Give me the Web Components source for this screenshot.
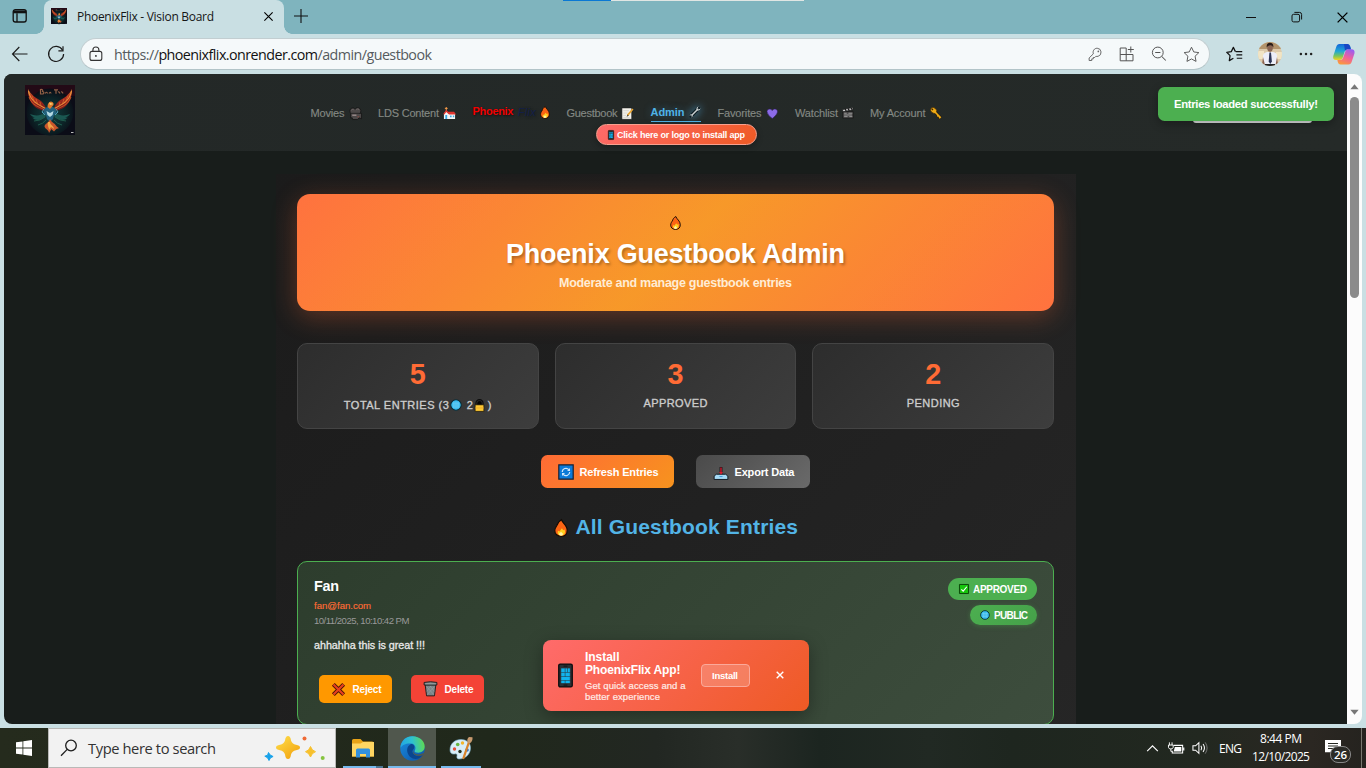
<!DOCTYPE html>
<html lang="en">
<head>
<meta charset="utf-8">
<title>PhoenixFlix - Vision Board</title>
<style>
html,body{margin:0;padding:0;width:1366px;height:768px;overflow:hidden;font-family:"Liberation Sans",Arial,sans-serif}
</style>
</head>
<body>
<desktop-screen></desktop-screen>
<script>
const ICONS = {
  workspaces:['0 0 16 16','<g fill="none" stroke="#111" stroke-width="1.3"><rect x="1.200" y="1.600" width="13" height="12.400" rx="2.200"/><path d="M5 5.200V14"/></g><path d="M1.200 2.400h13v2.900h-13z" fill="#111"/>'],
  cross:['0 0 12 12','<path d="M1.500 1.500l9 9M10.500 1.500l-9 9" stroke="currentColor" stroke-width="1.250" fill="none"/>'],
  close:['0 0 10 10','<path d="M1.700 1.700l6.600 6.600M8.300 1.700L1.700 8.300" stroke="#fff" stroke-width="1.400" fill="none"/>'],
  plus:['0 0 14 14','<path d="M7 0v14M0 7h14" stroke="#111" stroke-width="1.100"/>'],
  min:['0 0 12 12','<path d="M1 6.500h10" stroke="#111" stroke-width="1"/>'],
  restore:['0 0 12 12','<rect x="1" y="3.300" width="7.600" height="7.600" rx="1.600" fill="none" stroke="#111"/><path d="M3.400 1.400h5.100a2.100 2.100 0 0 1 2.100 2.100v5" fill="none" stroke="#111"/>'],
  back:['0 0 18 16','<path d="M16.500 8H1.500M8.300 1L1.500 8l6.800 7" fill="none" stroke="#1b1b1b" stroke-width="1.150"/>'],
  reload:['0 0 18 18','<path d="M15.600 5.200A7.500 7.500 0 1 0 16.600 9" fill="none" stroke="#1b1b1b" stroke-width="1.200"/><path d="M16 1.200v4.600h-4.600" fill="none" stroke="#1b1b1b" stroke-width="1.200"/>'],
  lock:['0 0 14 16','<rect x="1" y="5.400" width="11.800" height="9" rx="2" fill="none" stroke="#333" stroke-width="1.100"/><path d="M3.900 5.200V4a3 3 0 0 1 6 0v1.200" fill="none" stroke="#333" stroke-width="1.100"/><circle cx="6.900" cy="9.900" r=".950" fill="#333"/>'],
  keyo:['0 0 16 16','<path d="M9.800 1.300a4.400 4.400 0 0 1 1 8.600c-1 .3-1.700.2-2.400 0L7.200 11.200H5.600v1.500H4v1.700H1.200v-2.700l4.500-4.400C4.700 4.200 6.700 1.300 9.800 1.300z" fill="none" stroke="#666" stroke-width="1.050" stroke-linejoin="round"/><circle cx="11" cy="4.700" r=".9" fill="#666"/>'],
  apps:['0 0 16 16','<path d="M7.200 2H1.200v12.800H14V8.500H1.200M7.200 2v12.800M11.800.5v6M8.800 3.500h6" fill="none" stroke="#555" stroke-width="1"/>'],
  zoomout:['0 0 16 16','<circle cx="6.800" cy="6.500" r="5.400" fill="none" stroke="#555"/><path d="M10.800 10.500l4 4M4.200 6.500h5.200" stroke="#555" stroke-width="1.050"/>'],
  star:['0 0 18 18','<path d="M9 1.300l2.400 5 5.400.7-4 3.800 1 5.500L9 13.700l-4.800 2.600 1-5.500-4-3.800 5.400-.7z" fill="none" stroke="#555" stroke-width="1" stroke-linejoin="round"/>'],
  favs:['0 0 18 16','<path d="M10 5.500L7.800 1 5.600 5.500.8 6.200l3.500 3.500-.8 5.300 4.300-2.500M10.300 5.500h6.900M11 9h6.200M11.400 12.500h5.800" fill="none" stroke="#111" stroke-width="1.300" stroke-linejoin="round"/>'],
  dots:['0 0 14 4','<g fill="#222"><circle cx="1.900" cy="2" r="1.250"/><circle cx="7" cy="2" r="1.250"/><circle cx="12.100" cy="2" r="1.250"/></g>'],
  avatar:['0 0 24 24','<defs><clipPath id="c"><circle cx="12" cy="12" r="12"/></clipPath></defs><g clip-path="url(#c)"><path d="M0 0h24v24H0z" fill="#dccaab"/><path d="M0 0h24v7H0z" fill="#b3946c"/><path d="M0 9h6v8H0zM18 10h6v7h-6z" fill="#f1e4c4"/><path d="M5 23V13q1-2.500 4-3h6q4 .5 4 3.500V23z" fill="#eceef8"/><path d="M5 15l2 8H4zM19 15l-1.500 8H20z" fill="#8a6450"/><ellipse cx="12" cy="5.800" rx="2.800" ry="4" fill="#8a6553"/><path d="M8.700 5.500Q8.200.8 12 .8t3.300 4.700Q14.500 3 12 3.200T8.700 5.500z" fill="#2a1c18"/><path d="M11.400 10.500h1.600l.9 9-1.600 2.500-1.600-2.500z" fill="#2b3556"/><path d="M7 22h10v2H7z" fill="#222"/></g>'],
  copilot:['0 0 22 21','<defs><linearGradient id="a" x1="0" y1="0" x2="0" y2="1"><stop offset="0" stop-color="#1464d8"/><stop offset=".45" stop-color="#1ea7d6"/><stop offset=".75" stop-color="#7ac65a"/><stop offset="1" stop-color="#f4d21f"/></linearGradient><linearGradient id="b" x1="0.7" y1="0" x2="0.3" y2="1"><stop offset="0" stop-color="#9b5cf0"/><stop offset=".5" stop-color="#f0609c"/><stop offset="1" stop-color="#fb9a3c"/></linearGradient></defs><path d="M6.500 0h8q2 0 2.700 2.500l.7 2.800h-3.500q-2 0-2.700 2.300L9.600 14q-.8 2-2.600 2H3Q-.6 16 .3 12L3.200 3Q4 0 6.500 0z" fill="url(#a)"/><path d="M15.500 20.500h-8q-2 0-2.700-2.500l-.4-2h3q2 0 2.700-2.300l2.200-6.200q.7-2.200 2.700-2.200h3.500q3.500.2 3 4L18.800 17.500q-.8 3-3.300 3z" fill="url(#b)"/><path d="M11 0h3.500q2 0 2.700 2.500l.7 2.800h-3.500q-1.500 0-2.400 1.600z" fill="#1846c4"/>'],
  phoenix:['0 0 50 50','<defs><radialGradient id="g" cx=".5" cy=".55" r=".55"><stop offset="0" stop-color="#123f40"/><stop offset=".6" stop-color="#0c2427"/><stop offset="1" stop-color="#0a0c16"/></radialGradient><linearGradient id="w" x1="0" y1="0" x2="0" y2="1"><stop offset="0" stop-color="#d9822f"/><stop offset=".35" stop-color="#b5321f"/><stop offset="1" stop-color="#6b1519"/></linearGradient></defs><path d="M0 0h50v50H0z" fill="#0b0c17"/><path d="M0 0h50v11H0z" fill="#230a16"/><circle cx="25" cy="27" r="23.500" fill="url(#g)"/><path d="M22 26C13 26 3 20 3 4c1.500 3.500 3.500 5 5.500 7 4 3.500 9 4 12.500 12zM28 26C37 26 47 20 47 4c-1.500 3.500-3.500 5-5.500 7-4 3.500-9 4-12.500 12z" fill="url(#w)"/><path d="M3.500 6c1.500 9 8 13 17 17.500M46.500 6c-1.500 9-8 13-17 17.500" stroke="#e8923c" stroke-width="1.100" fill="none"/><path d="M4 12c3 8 8 9 15 12.500M46 12c-3 8-8 9-15 12.500M7 11l3 7M11 14l2 6M15 17l1 4M43 11l-3 7M39 14l-2 6M35 17l-1 4" stroke="#df6a2b" stroke-width=".7" fill="none"/><path d="M20 28c-5 3-10 3-15 1 1 2 3 3 5 3.500-1 0-2 .5-3 0 4 4 10 3 14-1.500zM30 28c5 3 10 3 15 1-1 2-3 3-5 3.500 1 0 2 .5 3 0-4 4-10 3-14-1.500z" fill="#1a5751"/><path d="M9 36q6 0 11-4M41 36q-6 0-11-4M13 40q5-1 8-5M37 40q-5-1-8-5" stroke="#1f5c4c" stroke-width="1" fill="none"/><path d="M20 23l5-2 5 2 2 5-3 2-1 4-3 3-3-3-1-4-3-2z" fill="#23627e"/><path d="M21.500 26l3.500 2 3.500-2-1 4-2.500 2-2.500-2z" fill="#b5dbe4"/><path d="M19 24l-2 3 3 3M31 24l2 3-3 3" stroke="#4e9db4" fill="none"/><path d="M22.500 22q0-5 3.500-5.500 3 .5 2.500 3.500L25 24z" fill="#df7a2c"/><path d="M24 17.500l4.500 1.500-3.500 1z" fill="#fbd074"/><path d="M25 34c1 3 4.500 4 6 6.500 1 2 3 1.500 2.500 3-2-.5-3 1-4.500 3-1-1-2-1.500-2.500-2.500L24 48c0-3-4-4-4.500-6.500C20 38 24 38 25 34z" fill="#c9562b"/><path d="M25 37c0 3 4 4 4 7l-3-2-2 3c0-3-2-4-1-8z" fill="#f0a447"/><path d="M15.500 9v-4.500q3-.3 2 2 2.500.3.500 2.500zM20 8.500q2-2.500 2.500 0M24 8.500q1.500-2.500 2 0M29 4.800h4M31 4.800V8.800M33 7q1-.7 2 1.500M36 7q1.500-.5 2 1.500" stroke="#a9704f" stroke-width="1.200" fill="none" opacity=".85"/><path d="M46 47h2.500v1H46z" fill="#bbb"/>'],
  camera:['0 0 14 14','<path d="M1 4a3 3 0 0 1 5.500-1.600A3.400 3.400 0 0 1 12.800 4q0 1.700-1.500 3l2.200-.3v6l-2.500-1-2 1.800H4l-.5-1.800H1.800V7Q1 5.800 1 4z" fill="#4d4949" stroke="#111" stroke-width=".8"/><path d="M2.600 3.600q1-1.600 2.500-.6M7.800 3q1.400-1.700 3-.3" stroke="#77706f" stroke-width=".8" fill="none"/><path d="M1.800 6.800h9" stroke="#191818" stroke-width=".8"/><path d="M3.500 9h4.500" stroke="#938585" stroke-width="1.600"/><path d="M9 10.500h2" stroke="#8c4a43" stroke-width="1"/>'],
  church:['0 0 14 14','<path d="M3.500 0v4M2 1.500h3" stroke="#ffa04a" stroke-width="1"/><path d="M1 7l2.500-3 2.500 3h7v6H1z" fill="#f5f5f5"/><path d="M.3 7.500L3.500 3l2 2.200H12L14 8H6.500l-3-2.500-2 2.500z" fill="#e0342e"/><path d="M2.500 8.500h2V13h-2zM7.500 9.200h1.800v1.800H7.500zM10.600 9.200h1.500v1.800h-1.500z" fill="#38a9e4"/>'],
  fire:['0 0 14 18','<path d="M7.500.7c.6 3 5.700 5.600 5.700 10.500 0 4-2.600 6.100-6.100 6.100S.8 15.200.8 11.700c0-2.600 1.300-4 2.200-5.400C3.600 4.500 4.500 2 7.500.7z" fill="#fb6414" stroke="#120b05" stroke-width="1.200"/><path d="M8 9.200l1.100 2 1.400-.8c1.300 3.300.2 6-3.400 6-3.200 0-4-2.400-3-4.700l1.300.9z" fill="#ffd01f"/><path d="M7 12.800l2.100 2.300Q8.800 16.700 7 16.700T4.900 15z" fill="#fff5a8"/>'],
  memo:['0 0 14 14','<path d="M1 1h10.500v12.300H1z" fill="#f3f1ea" stroke="#1c1c1c" stroke-width=".6"/><path d="M2.500 4h6M2.500 6.500h4.500M2.500 9h3M2.500 11.200h7" stroke="#c9c8c4" stroke-width=".7"/><path d="M12.800 2.200L7 9" stroke="#e8a532" stroke-width="1.800"/><path d="M7.300 8.200L6 10.500 8.300 9.400z" fill="#222"/>'],
  wrench:['0 0 14 14','<path d="M2.500 11.500L11 3" stroke="#0d1c22" stroke-width="4.200" stroke-linecap="round"/><path d="M3 11L10.800 3.200" stroke="#c9cfd0" stroke-width="1.700"/><path d="M9.300 2.200l1.500-1.200M11.800 4.700l1.200-1.500M9.300 2.200v2.500h2.500M1.300 11.200l1-1.400 2 2-1.500 1" stroke="#c9cfd0" stroke-width="1.100" fill="none"/>'],
  heart:['0 0 14 13','<path d="M7 12.400Q1 8.200.8 4.400C.7 1 5 .1 7 3 9 .1 13.300 1 13.200 4.400 13 8.200 7 12.400 7 12.400z" fill="#8c6be8" stroke="#2b1d55" stroke-width=".7"/>'],
  clapper:['0 0 14 14','<path d="M1 5.500h12V13H1z" fill="#4c4b4b" stroke="#111" stroke-width=".8"/><path d="M1 5.500L.7 3 12.500.7l.5 2.500z" fill="#ddd" stroke="#111" stroke-width=".8"/><path d="M3.500 2.500l1.500 2M7 1.800L8.500 4M10.500 1.200L12 3.200" stroke="#111" stroke-width="1.400"/><path d="M2.500 7.300h3M7.500 7.300H12M2.500 9.300h9M2.500 11.200h4M8.500 11.200H12" stroke="#aaa" stroke-width=".9"/>'],
  key:['0 0 14 14','<path d="M5.500 5.500l7 7M9.500 9.700l-1.500 1.500M11.700 12l-1.500 1.500" stroke="#2d1c04" stroke-width="3"/><ellipse cx="4.200" cy="4" rx="3.800" ry="3.100" transform="rotate(40 4.200 4)" fill="#f0ab16" stroke="#2d1c04" stroke-width=".7"/><path d="M5 5l7.500 7.700M9.800 9.700l-1.300 1.300M12 11.800l-1.400 1.300" stroke="#f0ab16" stroke-width="1.900"/><circle cx="2.800" cy="2.800" r="1" fill="#3a260a"/>'],
  phone:['0 0 16 26','<rect x=".8" y=".8" width="14.400" height="24.400" rx="1.500" fill="#2c3034" stroke="#0c0c0e" stroke-width="1.400"/><path d="M3.500 5.500h3.700v3.800H3.500zM8 5.500h1.800v3.800H8zM10.600 5.500h2v3.800h-2zM3.500 10h3.700v3.700H3.500zM8 10h4.600v3.700H8zM3.500 14.500h9.100v3.300H3.500zM3.500 18.500h3.700v2.600H3.500zM8 18.500h4.600v2.600H8z" fill="#12b4ee" stroke="#12b4ee" stroke-width=".3"/><path d="M6 23.200h4M6 3h4" stroke="#111"/>'],
  globe:['0 0 14 14','<circle cx="7" cy="7" r="6.100" fill="#22b4ec" stroke="#0c2932" stroke-width="1.200"/><path d="M2.500 4.800h9M1.800 7h10.400M2.500 9.300h9M7 2v10M4.600 2.500v9M9.400 2.500v9" stroke="#a9e5f7" stroke-width=".5"/>'],
  padlock:['0 0 12 14','<path d="M2.800 7V4.500a3.200 3.200 0 0 1 6.400 0V7" fill="#050505" stroke="#0b0b0b" stroke-width="2.600"/><path d="M3 7V4.500a3 3 0 0 1 6 0V7" fill="none" stroke="#343433" stroke-width=".8"/><rect x="1.200" y="6.300" width="9.600" height="7" fill="#fdc834" stroke="#241b07" stroke-width=".8"/><path d="M1.500 9.700h9" stroke="#eaaa2b"/>'],
  refresh:['0 0 16 16','<path d="M.8.8h14.400v14.400H.8z" fill="#0c7ad8" stroke="#172033" stroke-width="1.200"/><path d="M4.300 8a3.700 3.700 0 0 1 6.500-2.400M11.700 8a3.700 3.700 0 0 1-6.500 2.400" fill="none" stroke="#cfe6fa" stroke-width="1.200"/><path d="M12 4v3H9zM4 12V9h3z" fill="#cfe6fa"/>'],
  inbox:['0 0 16 14','<path d="M3 7.800h10l2.400 2v3.600H.6V9.800z" fill="#a7daf5" stroke="#0d151c" stroke-width="1"/><path d="M5.500 9.800q2.500 2.500 5 0z" fill="#3b9fe0"/><path d="M8 0V7" stroke="#161013" stroke-width="3"/><path d="M8 .5V6" stroke="#d81b30" stroke-width="1.500"/><path d="M5.800 5.500L8 8.300l2.200-2.800z" fill="#d81b30"/>'],
  redx:['0 0 16 16','<path d="M2.500 2.500l11 11M13.500 2.500l-11 11" stroke="#4b1407" stroke-width="4.300"/><path d="M2.700 2.700l10.600 10.600M13.300 2.700L2.700 13.300" stroke="#e8401f" stroke-width="2.300"/>'],
  bin:['0 0 16 17','<path d="M2.300 4h11.400l-1.500 11.800H3.800z" fill="#7b8588" stroke="#1b1d1e" stroke-width="1"/><path d="M4 6l7.500 8.500M7.500 5l4.500 6M12 6l-7.500 8.500M8.500 5L4 11" stroke="#99a3a6" stroke-width=".6"/><path d="M1.200 1.500q6.800-1.500 13.600 0v2.700H1.200z" fill="#7c8688" stroke="#1b1d1e" stroke-width="1"/><path d="M2.500 3h11" stroke="#a4acae" stroke-width=".8"/>'],
  check:['0 0 11 11','<path d="M.5.500h10v10H.5z" fill="#16c60c" stroke="#083f07"/><path d="M2.600 5.900l2 2L8.600 3" fill="none" stroke="#fff" stroke-width="1.200"/>'],
  win:['0 0 16 16','<path d="M0 2.300l6.500-.9v6.200H0zM7.300 1.300L16 0v7.600H7.300zM0 8.400h6.500v6.200L0 13.700zM7.300 8.400H16V16l-8.700-1.300z" fill="#fff"/>'],
  search:['0 0 18 18','<circle cx="11" cy="6.500" r="5.300" fill="none" stroke="#1d1d1d" stroke-width="1.300"/><path d="M7.200 10.400L1 16.700" stroke="#1d1d1d" stroke-width="1.300"/>'],
  sparkles:['0 0 62 26','<defs><linearGradient id="y" x1="0" x2=".8" y2="1"><stop offset="0" stop-color="#ffe04d"/><stop offset="1" stop-color="#f2a30f"/></linearGradient></defs><path d="M24 1q2.500 0 3 4.500 1 3.500 5 4.300 4 .7 4 2.700t-4 2.700q-4 .8-5 4.300Q26.500 24 24 24t-3-4.500q-1-3.500-5-4.300-4-.7-4-2.700t4-2.700q4-.8 5-4.300Q21.500 1 24 1z" fill="url(#y)"/><path d="M46.500 11.500q1.200 4 5 5.200-3.800 1.300-5 5.300-1.200-4-5-5.300 3.800-1.200 5-5.200z" fill="#f7c02c" stroke="#f7c02c" stroke-linejoin="round"/><path d="M4.500 17.500l1.600 2.500 3 1.500-2.600 1.300L5 25.500l-1.500-2.800-2.700-1.500 2.800-1z" fill="#18a2ea" stroke="#18a2ea" stroke-linejoin="round"/><circle cx="40.500" cy="3.400" r="2" fill="#ef6a35"/><circle cx="58.700" cy="23" r="2" fill="#86c440"/>'],
  folder:['0 0 22 19','<path d="M0 1.500Q0 0 1.500 0h7l2.500 2.500H20q2 0 2 1.500v13.500H0z" fill="#e8a317"/><path d="M0 4.500h8.500L11 3h11v14.500H0z" fill="#ffd662"/><path d="M4 18.500V11q0-1.500 1.500-1.500h11Q18 9.500 18 11v7.500h-4V15h-6v3.500z" fill="#3391de"/>'],
  edge:['0 0 25 25','<defs><linearGradient id="e" x1="0" y1=".5" x2="1" y2=".4"><stop offset="0" stop-color="#22a5e4"/><stop offset=".5" stop-color="#2fc2cf"/><stop offset="1" stop-color="#5fd94f"/></linearGradient><linearGradient id="f" x1="0" y1="0" x2="1" y2="1"><stop offset="0" stop-color="#1b8fe0"/><stop offset="1" stop-color="#0c51a5"/></linearGradient></defs><circle cx="12.500" cy="12.500" r="12.200" fill="url(#f)"/><path d="M.4 12C1 4.500 6 .3 12.500.3c7.500 0 12.200 5.200 12.200 10.200 0 4-3 6.200-6.300 6.200-2.700 0-4.300-1-3.700-2 1.500-2.300 1-6.700-3.500-7.200C6.500 7 2 8.700.4 12z" fill="url(#e)"/><path d="M11 8c-3 1.500-4.500 4.500-3.500 8.500 1.200 4.500 5.500 7.500 11 6 2-.8 3.500-2.200 4.600-4-4 2.500-8.500 1.500-10.200-1.500-1.200-2 .2-3 1.100-4.500C14.800 10.500 14 8 11 8z" fill="#0a468f"/><path d="M14.200 13.500q-2 2.300.8 4.300 4 2 9-1-.2 1.800-1.200 2.400-5 1.800-8.500-.7-2.700-2.500-.1-5z" fill="#50574d"/>'],
  paint:['0 0 24 24','<path d="M1 14C1 7.500 6 3.500 12 3.500c5 0 9.500 3 9.500 8.500 0 6.500-5.500 11-11.500 11-2 0-2.500-1.500-2-3 .5-1.700-.5-2.500-2.500-2C3 18.500 1 17 1 14z" fill="#d8edf7" stroke="#7fb3cf" stroke-width=".6"/><circle cx="5.500" cy="13" r="1.700" fill="#e4503b"/><circle cx="8.700" cy="8.500" r="1.800" fill="#68b742"/><circle cx="13.500" cy="7" r="1.700" fill="#f3b52b"/><circle cx="18" cy="14" r="1.800" fill="#2e71c9"/><circle cx="11" cy="15.500" r="1.700" fill="#26301f"/><path d="M20 6l-5.500 16" stroke="#d9832b" stroke-width="2.300" stroke-linecap="round"/><path d="M18.500 6.500q-1-3.500 1.500-5.500l3.500.3q.5 3.500-2.500 6z" fill="#c79a6f"/>'],
  chevron:['0 0 14 9','<path d="M1 8l6-6 6 6" fill="none" stroke="#fff" stroke-width="1.300"/>'],
  battery:['0 0 18 13','<path d="M6 3.200h9.500v8H4.500V9" fill="none" stroke="#fff" stroke-width="1.100"/><path d="M7.300 5h6.800v4.600H6z M16 5.500h1.300v3.200H16z" fill="#fff"/><path d="M.5 2.800h5v2.500Q5.200 7 3 7T.5 5.300zM1.500 0v3M4.300 0v3M3 7v2.500h1.500" fill="none" stroke="#fff" stroke-width="1"/>'],
  speaker:['0 0 18 14','<path d="M1 4.700h2.800L7.300 1.300v11.400L3.800 9.300H1z" fill="none" stroke="#fff" stroke-width="1.100"/><path d="M9.500 4.700q1.500 2.300 0 4.600M11.700 2.800q3 4.200 0 8.400" fill="none" stroke="#fff" stroke-width="1.100"/><path d="M14 1q4 6 0 12" fill="none" stroke="#777" stroke-width="1"/>'],
  note:['0 0 16 15','<path d="M0 0h16v12.300H9L6 15v-2.700H0z" fill="#fff"/><path d="M3 3.500h10M3 6h10M3 8.500h6" stroke="#252822" stroke-width="1"/>'],
  up:['0 0 10 6','<path d="M5 0l4.600 5.500H.4z" fill="#777"/>'],
  down:['0 0 10 6','<path d="M5 6L.4.5h9.200z" fill="#777"/>']
};

function element(name, css, html){
  const t = document.createElement('template');
  t.innerHTML = `<style>${css}</style>${html}`;
  customElements.define(name, class extends HTMLElement{
    constructor(){ super(); this.attachShadow({mode:'open'}).append(t.content.cloneNode(true)); }
  });
}

/* <ui-icon name w h>: one drawing from the icon set */
customElements.define('ui-icon', class extends HTMLElement{
  connectedCallback(){
    if(this.shadowRoot) return;
    const [box, body] = ICONS[this.getAttribute('name')];
    const w = this.getAttribute('w'), h = this.getAttribute('h') || w;
    this.attachShadow({mode:'open'}).innerHTML =
      `<style>:host{display:block;flex:none;width:${w}px;height:${h}px}svg{display:block;overflow:visible}</style>
       <svg width="${w}" height="${h}" viewBox="${box}" aria-hidden="true">${body}</svg>`;
  }
});

element('browser-tabs', `
:host{display:flex;height:34px;background:#7fb4be;position:relative;align-items:center}
.ws{padding:0 16px 2px 12px}
.tab{align-self:stretch;width:240px;box-sizing:border-box;background:#c9dfe3;border-radius:8px 8px 0 0;display:flex;align-items:center;padding:0 10px 2px 7px;position:relative}
.tab::before,.tab::after{content:"";position:absolute;bottom:0;width:8px;height:8px}
.tab::before{left:-8px;background:radial-gradient(circle at 0 0,transparent 7.500px,#c9dfe3 8px)}
.tab::after{right:-8px;background:radial-gradient(circle at 100% 0,transparent 7.500px,#c9dfe3 8px)}
.t{font:12px "Open Sans",sans-serif;color:#151515;margin-left:10px}
.x{margin-left:auto}
.plus{margin:-3px auto 0 10px}
.ctl{display:flex;gap:33.500px;padding-right:17px}
.strip{position:absolute;left:563px;top:0;width:241px;height:1px;background:linear-gradient(90deg,#0a78d4 48px,#e0e6e4 48px)}`, `
<div class="ws"><ui-icon name="workspaces" w="16"></ui-icon></div>
<div class="tab"><ui-icon name="phoenix" w="16"></ui-icon><fit-text class="t" w="137">PhoenixFlix - Vision Board</fit-text><ui-icon class="x" name="cross" w="11"></ui-icon></div>
<ui-icon class="plus" name="plus" w="14"></ui-icon>
<div class="ctl"><ui-icon name="min" w="12"></ui-icon><ui-icon name="restore" w="12"></ui-icon><ui-icon name="cross" w="13"></ui-icon></div>
<div class="strip"></div>`);

element('browser-toolbar', `
:host{display:flex;height:40px;background:#c9dfe3;align-items:center;padding:0 11px;box-sizing:border-box}
.re{margin-left:18px}
.bar{flex:none;margin-left:15px;width:1130px;height:32px;box-sizing:border-box;border:1px solid #c2ced1;border-bottom-color:#b2c4c8;border-radius:16px;background:#f5f9fa;display:flex;align-items:center;padding:0 9px 0 8px}
.url{font:14.300px "Open Sans",sans-serif;color:#555b5e;margin:0 0 0 11px}
.url b{font-weight:400;color:#111}
.acts{display:flex;align-items:center;margin-left:auto;gap:16px}
.more{display:flex;align-items:center;margin-left:16px}`, `
<ui-icon name="back" w="18" h="16"></ui-icon><ui-icon class="re" name="reload" w="18"></ui-icon>
<div class="bar"><ui-icon name="lock" w="14" h="16"></ui-icon><fit-text class="url" w="318">https://<b>phoenixflix.onrender.com</b>/admin/guestbook</fit-text>
<div class="acts"><ui-icon name="keyo" w="15"></ui-icon><ui-icon name="apps" w="16"></ui-icon><ui-icon name="zoomout" w="16"></ui-icon><ui-icon name="star" w="17"></ui-icon></div></div>
<div class="more"><ui-icon name="favs" w="17" h="16"></ui-icon><ui-icon name="avatar" w="24" style="margin-left:15px"></ui-icon><ui-icon name="dots" w="14" h="4" style="margin-left:17px"></ui-icon><ui-icon name="copilot" w="22" h="21" style="margin-left:20px"></ui-icon></div>`);

element('nav-link', `
:host{display:flex;align-items:center;justify-content:space-between;flex:none;height:20px;color:#838883;font-size:11px;box-sizing:border-box;-webkit-text-stroke:.15px currentColor}
:host([active]){color:#4fb3e8;font-weight:700;text-shadow:0 0 8px rgba(79,179,232,.35);height:18px;border-bottom:1px solid #4fb3e8;padding-bottom:2px;-webkit-text-stroke:0}
:host([active]) ::slotted(ui-icon){filter:drop-shadow(0 0 4px rgba(79,179,232,.9))}
:host([raised]){height:24px;align-self:flex-start;-webkit-text-stroke:0}`, `<slot></slot>`);

element('site-header', `
:host{display:flex;height:77px;background:linear-gradient(90deg,#232827,#252a28);box-sizing:border-box;padding-left:21px;position:relative}
.logo{margin-top:11px}
.mid{margin-left:235px;display:flex;flex-direction:column}
nav{display:flex;gap:16.500px;margin:26px 0 0 .5px;height:24px;align-items:center}
nav-link{margin-top:2px}
.b{font-weight:700;color:#f20000;text-shadow:1px 1px 2px #111;margin-top:-2px}.f{font-style:italic;color:#131f48;text-shadow:1px 1px 3px #151a1c;margin-top:-1px}
.pill{align-self:flex-start;margin:0 0 0 286px;width:161px;height:21px;box-sizing:border-box;border:1px solid #f8a08e;border-radius:11px;background:linear-gradient(135deg,#ff6b6b,#ee5a24);display:flex;align-items:center;justify-content:center;gap:3px;color:#fff;font-weight:700;font-size:9px;box-shadow:0 2px 6px rgba(0,0,0,.3)}`, `
<ui-icon class="logo" name="phoenix" w="50"></ui-icon>
<div class="mid"><nav>
<nav-link style="width:51px"><fit-text w="34">Movies</fit-text><ui-icon name="camera" w="13"></ui-icon></nav-link>
<nav-link style="width:78px"><fit-text w="61">LDS Content</fit-text><ui-icon name="church" w="13"></ui-icon></nav-link>
<nav-link raised style="width:77.500px;margin-top:0"><fit-text class="b" w="41">Phoenix</fit-text><fit-text class="f" w="18">Flix</fit-text><ui-icon name="fire" w="10" h="13"></ui-icon></nav-link>
<nav-link style="width:67.500px"><fit-text w="51">Guestbook</fit-text><ui-icon name="memo" w="13"></ui-icon></nav-link>
<nav-link active style="width:50.500px"><fit-text w="34">Admin</fit-text><ui-icon name="wrench" w="12"></ui-icon></nav-link>
<nav-link style="width:61px"><fit-text w="44">Favorites</fit-text><ui-icon name="heart" w="12.500" h="11"></ui-icon></nav-link>
<nav-link style="width:58.500px"><fit-text w="43">Watchlist</fit-text><ui-icon name="clapper" w="12"></ui-icon></nav-link>
<nav-link style="width:72px"><fit-text w="55.500">My Account</fit-text><ui-icon name="key" w="12"></ui-icon></nav-link>
</nav><div class="pill"><ui-icon name="phone" w="6" h="10"></ui-icon><fit-text w="128">Click here or logo to install app</fit-text></div></div>`);

element('hero-banner', `
:host{display:flex;flex-direction:column;align-items:center;height:117px;box-sizing:border-box;padding-top:22px;border-radius:13px;background:linear-gradient(rgba(255,255,255,.05),rgba(255,255,255,.05)),linear-gradient(135deg,#ff6b35,#f7931e 50%,#ff6b35);box-shadow:0 6px 26px rgba(255,107,53,.3)}
h1{margin:7px 0 0;font-size:27px;line-height:34px;color:#fff;text-shadow:1.500px 1.500px 3px rgba(0,0,0,.3)}
p{margin:4px 0 0;font-size:12.500px;line-height:16px;font-weight:700;color:#ffecd4}`, `
<ui-icon name="fire" w="11" h="14"></ui-icon>
<h1><fit-text w="339">Phoenix Guestbook Admin</fit-text></h1>
<p><fit-text w="233">Moderate and manage guestbook entries</fit-text></p>`);

element('stat-card', `
:host{display:flex;flex-direction:column;align-items:center;height:86px;box-sizing:border-box;border:1px solid #444;border-radius:10px;background:linear-gradient(135deg,#2d2d2d,#3d3d3d);padding-top:13px}
.n{font-size:28.800px;line-height:34px;font-weight:700;color:#ff6b35}
.l{display:flex;align-items:center;height:14px;margin-top:5px;font-size:11px;color:#ccc;-webkit-text-stroke:.35px #ccc}
:host([icons]) .l{margin-top:7px}`, `<div class="n"><slot name="n"></slot></div><div class="l"><slot></slot></div>`);

element('ui-button', `
:host{display:flex;align-items:center;justify-content:center;box-sizing:border-box;color:#fff;font-weight:700;font-size:11px;border-radius:6.500px;gap:6px}`, `<slot></slot>`);

element('entry-card', `
:host{display:flex;justify-content:space-between;height:164px;box-sizing:border-box;border:1px solid #4caf50;border-radius:10px;background:linear-gradient(135deg,#2d3d2d,#3d4d3d);padding:16px}
.l{display:flex;flex-direction:column;align-items:flex-start}
.name{font-size:14.400px;line-height:17px;font-weight:700;color:#fff}
.mail{font-size:9.600px;line-height:12px;color:#ff6b35;margin-top:5px;-webkit-text-stroke:.15px currentColor}
.date{font-size:9.600px;line-height:12px;color:#999;margin-top:3px}
.msg{font-size:10.800px;line-height:14px;color:#e8e8e8;margin-top:11px;-webkit-text-stroke:.3px #e8e8e8}
.btns{display:flex;gap:19px;margin:23px 0 0 5px}
ui-button{width:73px;height:28px;border-radius:5px;font-size:10px;gap:7px;padding-left:1px}
.r{display:flex;flex-direction:column;align-items:flex-end;gap:5px}
.badge{display:flex;align-items:center;justify-content:center;gap:4px;height:22px;width:89px;border-radius:11px;background:#4caf50;color:#fff;font-weight:700;font-size:10px;padding-left:1px;box-sizing:border-box}
.pub{width:67px;height:20px;background:linear-gradient(135deg,#4caf50,#45a049);box-shadow:0 1px 5px rgba(76,175,80,.35)}`, `
<div class="l"><fit-text class="name" w="25">Fan</fit-text><fit-text class="mail" w="57">fan@fan.com</fit-text><fit-text class="date" w="95.500">10/11/2025, 10:10:42 PM</fit-text><fit-text class="msg" w="111">ahhahha this is great !!!</fit-text>
<div class="btns"><ui-button style="background:#ff9800"><ui-icon name="redx" w="15"></ui-icon><fit-text w="29">Reject</fit-text></ui-button><ui-button style="background:#f44336"><ui-icon name="bin" w="15" h="16"></ui-icon><fit-text w="29">Delete</fit-text></ui-button></div></div>
<div class="r"><div class="badge"><ui-icon name="check" w="10"></ui-icon><fit-text w="54">APPROVED</fit-text></div><div class="badge pub"><ui-icon name="globe" w="10"></ui-icon><fit-text w="34">PUBLIC</fit-text></div></div>`);

element('install-banner', `
:host{display:flex;align-items:center;width:266px;height:71px;box-sizing:border-box;border-radius:8px;background:linear-gradient(135deg,#ff6b6b,#ee5a24);box-shadow:0 5px 18px rgba(0,0,0,.35);color:#fff;padding-left:15px}
.tx{display:flex;flex-direction:column;margin:1px 15px 0 12.500px;width:100.500px}
.t{font-size:12px;line-height:13px;font-weight:700}.s{font-size:9.500px;line-height:11px;color:#ffece8;-webkit-text-stroke:.2px #ffece8}.s.a{margin-top:3px}
ui-button{width:49px;height:23px;border:1px solid #fba99a;background:rgba(255,255,255,.2);border-radius:4px;font-size:9.500px}
.x{margin:0 0 1px 25px}`, `
<ui-icon name="phone" w="15" h="25"></ui-icon>
<div class="tx"><fit-text class="t" w="34.500">Install</fit-text><fit-text class="t" w="95.500">PhoenixFlix App!</fit-text><fit-text class="s a" w="100.500">Get quick access and a</fit-text><fit-text class="s" w="75">better experience</fit-text></div>
<ui-button><fit-text w="26">Install</fit-text></ui-button><ui-icon class="x" name="close" w="10"></ui-icon>`);

element('toast-note', `
:host{display:flex;align-items:center;justify-content:center;width:176px;height:34px;border-radius:6.500px;background:#4caf50;color:#fff;font-weight:700;font-size:11.300px;box-shadow:0 3px 10px rgba(0,0,0,.3)}`, `<slot></slot>`);

element('page-scrollbar', `
:host{display:flex;flex-direction:column;align-items:center;width:15px;background:#fcfcfc;box-sizing:border-box;padding:10px 0 9px 0}
.thumb{width:9px;height:201px;border-radius:5px;background:#8b8b8b;margin:7px 0 auto}`, `
<ui-icon name="up" w="9" h="6"></ui-icon><div class="thumb"></div><ui-icon name="down" w="9" h="6"></ui-icon>`);

element('guestbook-page', `
:host{display:flex;height:650px;margin:0 4px;border-radius:8px;overflow:hidden;position:relative}
.page{width:1343px;background:#181d1b;height:650px;overflow:hidden}
main{margin:23px 0 0 272px;width:800px;height:720px;box-sizing:border-box;padding:20px 22px 0 21px;background:linear-gradient(135deg,#1b1b1b,#272727);display:flex;flex-direction:column}
.stats{display:grid;grid-template-columns:repeat(3,1fr);gap:16px;margin-top:32px}
.acts{display:flex;margin:26px 0 0 244px;gap:22px}
.acts ui-button{padding-left:1px}
h2{display:flex;align-items:center;gap:7.500px;margin:26px 0 0 257px;height:26px;font-size:21px;color:#52b4e6}
entry-card{margin-top:21px}
.under{position:absolute;left:1189px;top:46px;width:119px;height:3px;border-radius:0 0 3px 3px;background:#e2e4e4}
toast-note{position:absolute;left:1154px;top:13px}
install-banner{position:absolute;left:538.500px;top:566px}`, `
<div class="page"><site-header></site-header><main><hero-banner></hero-banner>
<div class="stats">
<stat-card icons><span slot="n">5</span><fit-text w="105">TOTAL ENTRIES (3</fit-text><ui-icon name="globe" w="12" style="margin:0 5px 0 1px"></ui-icon><fit-text w="6">2</fit-text><ui-icon name="padlock" w="11" h="13" style="margin:0 3px 0 1px"></ui-icon><fit-text w="4">)</fit-text></stat-card>
<stat-card><span slot="n">3</span><fit-text w="64">APPROVED</fit-text></stat-card>
<stat-card><span slot="n">2</span><fit-text w="53">PENDING</fit-text></stat-card></div>
<div class="acts"><ui-button style="width:133px;height:33px;background:linear-gradient(135deg,#ff6b35,#f7931e)"><ui-icon name="refresh" w="16"></ui-icon><fit-text w="79">Refresh Entries</fit-text></ui-button>
<ui-button style="width:114px;height:33px;background:linear-gradient(135deg,#4a4a4a,#6a6a6a)"><ui-icon name="inbox" w="16" h="13" style="margin-top:3px"></ui-icon><fit-text w="60">Export Data</fit-text></ui-button></div>
<h2><ui-icon name="fire" w="14" h="18" style="margin-top:2px"></ui-icon><fit-text w="222.500">All Guestbook Entries</fit-text></h2>
<entry-card></entry-card></main></div>
<page-scrollbar></page-scrollbar>
<div class="under"></div><toast-note><fit-text w="144">Entries loaded successfully!</fit-text></toast-note><install-banner></install-banner>`);

element('task-bar', `
:host{display:flex;align-items:center;height:40px;background:linear-gradient(90deg,#252b1d 0,#20281b 36%,#222722 48%,#292e29 54%,#1c2520 60%,#212923 68%,#1e261f 74%,#222820 88%,#2b2722 96%,#25231f);color:#fff;font-family:"Open Sans",sans-serif}
.start{width:48px;display:flex;justify-content:center}
.search{width:288px;height:40px;box-sizing:border-box;background:#f2f2f2;border:1px solid #b9b9b7;display:flex;align-items:center;padding:0 9px 0 11px;color:#333;font-size:14.700px}
.app{height:40px;display:flex;box-sizing:border-box;justify-content:center;align-items:center;padding-top:2px;border-bottom:2px solid #76b9ed}
.tray{display:flex;align-items:center;margin-left:auto;font-size:12px}
.clock{display:flex;flex-direction:column;align-items:center;width:58px;line-height:18px;margin-left:10px}
.n{position:relative;width:28px;height:30px;margin:0 8px 0 14px;padding-left:1px}
.n ui-icon{margin-top:7px}
.n span{position:absolute;left:6px;top:13px;width:19px;height:15px;border-radius:8px;border:1px solid #888;background:#2b2b27;font:600 11.500px/15px "Open Sans",sans-serif;text-align:center}
.end{height:40px;width:4px;border-left:1px solid #77776f}`, `
<div class="start"><ui-icon name="win" w="16"></ui-icon></div>
<div class="search"><ui-icon name="search" w="18"></ui-icon><fit-text w="128" style="margin-left:10px">Type here to search</fit-text><ui-icon name="sparkles" w="62" h="26" style="margin-left:auto"></ui-icon></div>
<div class="app" style="width:40px;margin-left:7px;border-image:linear-gradient(90deg,#76b9ed 32px,#4c7694 32px) 1;border-width:0 0 2px;border-style:solid"><ui-icon name="folder" w="22" h="19"></ui-icon></div>
<div class="app" style="width:48px;margin-left:5px;background:#50574d"><ui-icon name="edge" w="25"></ui-icon></div>
<div class="app" style="width:40px;margin-left:5px"><ui-icon name="paint" w="24"></ui-icon></div>
<div class="tray"><ui-icon name="chevron" w="13" h="8"></ui-icon><ui-icon name="battery" w="17" h="13" style="margin-left:9px"></ui-icon><ui-icon name="speaker" w="17" h="14" style="margin-left:7px"></ui-icon><fit-text w="23" style="margin-left:10px">ENG</fit-text>
<div class="clock"><fit-text w="42">8:44 PM</fit-text><fit-text w="58">12/10/2025</fit-text></div>
<div class="n"><ui-icon name="note" w="16" h="15"></ui-icon><span>26</span></div><div class="end"></div></div>`);

element('desktop-screen', `
:host{display:flex;flex-direction:column;width:1366px;height:768px;background:#c9dfe3;overflow:hidden}
task-bar{margin-top:4px}`, `<browser-tabs></browser-tabs><browser-toolbar></browser-toolbar><guestbook-page></guestbook-page><task-bar></task-bar>`);

/* <fit-text w>: one line of text, tracked so that it takes w pixels. Defined last, when every parent has its styles. */
customElements.define('fit-text', class extends HTMLElement{
  connectedCallback(){
    if(this.shadowRoot) return;
    this.attachShadow({mode:'open'}).innerHTML = '<style>:host{display:block;flex:none;white-space:nowrap}span{display:inline-block}</style><span><slot></slot></span>';
    const s = this.shadowRoot.querySelector('span'), w = +this.getAttribute('w'), n = this.textContent.length;
    if(n > 1) s.style.letterSpacing = ((w - s.getBoundingClientRect().width) / (n - 1)).toFixed(3) + 'px';
    this.style.width = w + 'px';
  }
});
</script>
</body>
</html>
